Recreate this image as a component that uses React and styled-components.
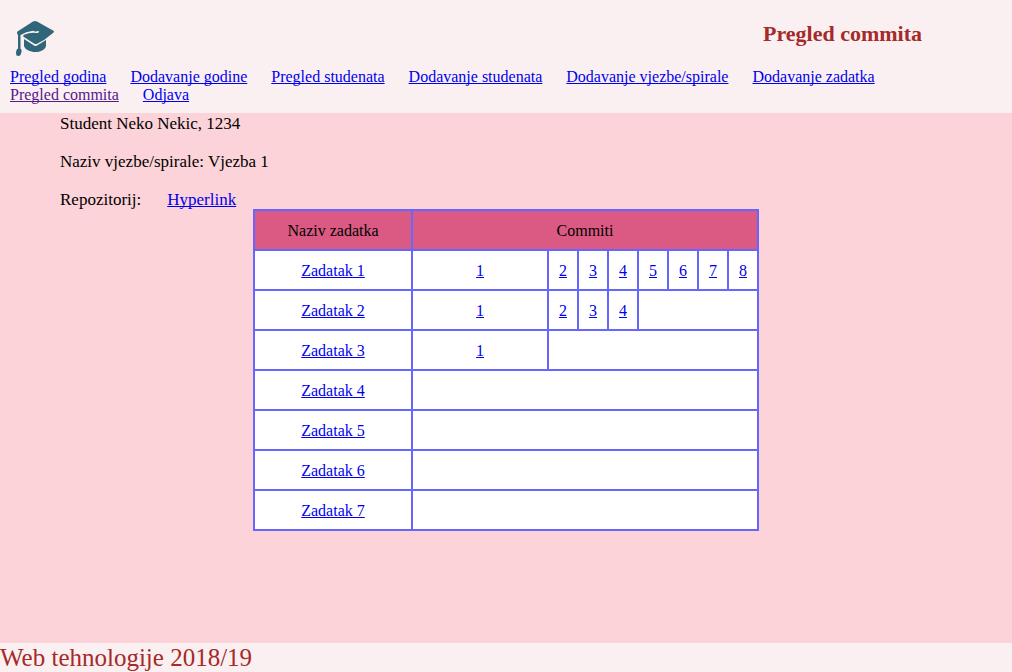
import React from "react";
import styled, { createGlobalStyle } from "styled-components";

const GlobalStyle = createGlobalStyle`
  *, *::before, *::after { box-sizing: border-box; }
  body {
    margin: 0;
    font-family: "Liberation Serif", "Times New Roman", serif;
    font-size: 16px;
    line-height: 18px;
    color: #000;
  }
`;

const Page = styled.div`
  display: flex;
  flex-direction: column;
  min-height: 100vh;
  background: #fcd3d8;
`;

const Header = styled.header`
  padding: 0 10px 9px;
  background: #fbf0f1;
`;

const Banner = styled.div`
  display: flex;
  align-items: center;
  justify-content: space-between;
  height: 68px;
  padding-right: 80px;
`;

const Logo = styled.svg`
  width: 50px;
  height: 44px;
  margin-top: 8px;
  fill: #2f6679;
`;

const Title = styled.h1`
  margin: 0;
  font-size: 22px;
  line-height: 26px;
  color: #a52a2a;
`;

const Nav = styled.nav`
  display: flex;
  flex-wrap: wrap;
  column-gap: 24px;
`;

const Link = styled.a`
  color: ${({ $visited }) => ($visited ? "#551a8b" : "#0000ee")};
  text-decoration: underline;
  text-decoration-skip-ink: none;
`;

const Main = styled.main`
  flex: 1;
`;

const Details = styled.section`
  display: flex;
  flex-direction: column;
  gap: 19px;
  padding: 1px 60px 0;
  font-size: 17px;
  line-height: 19px;
`;

const Detail = styled.p`
  display: flex;
  gap: 26px;
  margin: 0;
`;

const Table = styled.table`
  width: 50%;
  margin: 0 auto;
  border-collapse: collapse;
  table-layout: fixed;
  background: #fff;
  text-align: center;
`;

const Column = styled.col`
  width: ${({ $width }) => $width || "auto"};
`;

const Row = styled.tr`
  height: 40px;
`;

const Heading = styled.th`
  padding: 2px 0 0;
  border: 2px solid #6666ff;
  background: #db5a83;
  font-weight: normal;
`;

const Cell = styled.td`
  padding: 2px 0 0;
  border: 2px solid #6666ff;
`;

const Footer = styled.footer`
  background: #fbf0f1;
  color: #a52a2a;
  font-size: 25px;
  line-height: 29px;
`;

const pages = [
  "Pregled godina",
  "Dodavanje godine",
  "Pregled studenata",
  "Dodavanje studenata",
  "Dodavanje vjezbe/spirale",
  "Dodavanje zadatka",
  "Pregled commita",
  "Odjava",
];

const MAX_COMMITS = 8;
const tasks = [8, 4, 1, 0, 0, 0, 0].map((commits, i) => ({
  name: `Zadatak ${i + 1}`,
  commits: Array.from({ length: commits }, (_, n) => n + 1),
}));

function GraduationCap() {
  return (
    <Logo viewBox="0 0 50 44" role="img" aria-label="Logo">
      <path d="M7 16.500 Q7 15.500 9 14.500 L23 5.500 Q25 4.300 27 5.500 L43 14.500 Q45 15.500 43 17 L34 24 L27.500 27.500 Q26 28.500 24 27.500 L13.500 20.800 Q12.500 19.800 14 18.800 Q20 16.300 26 17 Q29 17 29 15.500 Q29 14.500 27 15.200 Q25 16 23 14.800 Q16 15.500 10.500 19 V32.500 Q12.300 34 11.500 36 L10.500 39 Q9 40.500 6.500 39.500 Q5.500 37 6.500 34 Q7 33 8 32.500 V19 Q7 18 7 16.500 Z" />
      <path d="M14 23 L24 29.500 Q25.500 30.500 27 29.500 L36 24 V30 C35 34 30 36 25.500 36 C20 36 15 33.500 14 30 Z" />
    </Logo>
  );
}

export default function App() {
  return (
    <Page>
      <GlobalStyle />
      <Header>
        <Banner>
          <GraduationCap />
          <Title>Pregled commita</Title>
        </Banner>
        <Nav>
          {pages.map((page) => (
            <Link key={page} href="#" $visited={page === "Pregled commita"}>
              {page}
            </Link>
          ))}
        </Nav>
      </Header>
      <Main>
        <Details>
          <Detail>Student Neko Nekic, 1234</Detail>
          <Detail>Naziv vjezbe/spirale: Vjezba 1</Detail>
          <Detail>
            <span>Repozitorij:</span>
            <Link href="#">Hyperlink</Link>
          </Detail>
        </Details>
        <Table>
          <colgroup>
            <Column $width="158px" />
            <Column />
            {Array.from({ length: MAX_COMMITS - 1 }, (_, i) => (
              <Column key={i} $width="30px" />
            ))}
          </colgroup>
          <thead>
            <Row>
              <Heading scope="col">Naziv zadatka</Heading>
              <Heading scope="colgroup" colSpan={MAX_COMMITS}>
                Commiti
              </Heading>
            </Row>
          </thead>
          <tbody>
            {tasks.map(({ name, commits }) => (
              <Row key={name}>
                <Cell>
                  <Link href="#">{name}</Link>
                </Cell>
                {commits.map((n) => (
                  <Cell key={n}>
                    <Link href="#">{n}</Link>
                  </Cell>
                ))}
                {commits.length < MAX_COMMITS && (
                  <Cell colSpan={MAX_COMMITS - commits.length} />
                )}
              </Row>
            ))}
          </tbody>
        </Table>
      </Main>
      <Footer>Web tehnologije 2018/19</Footer>
    </Page>
  );
}
